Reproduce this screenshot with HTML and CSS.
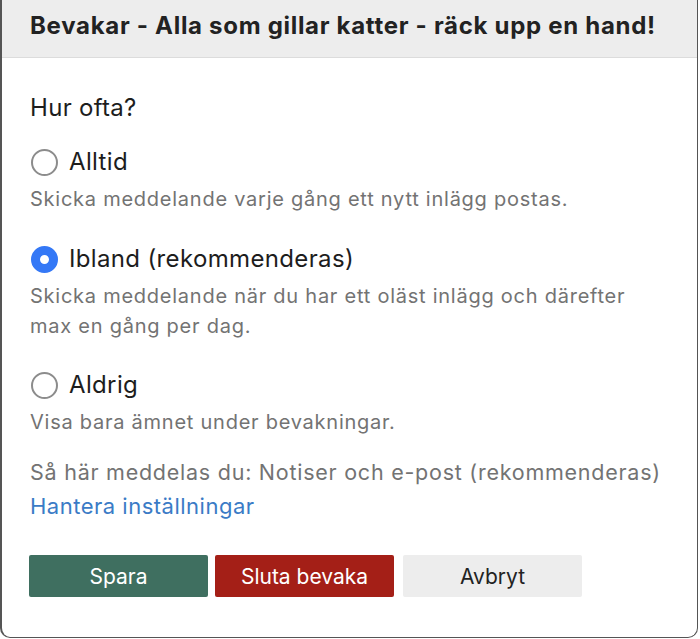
FILE: index.html
```
<!DOCTYPE html>
<html lang="sv">
<head>
<meta charset="utf-8">
<link rel="stylesheet" href="styles.css">
</head>
<body>
<div class="dialog">
  <div class="header"><h1 class="title">Bevakar - Alla som gillar katter - räck upp en hand!</h1></div>
  <div class="body">
    <p class="question">Hur ofta?</p>
    <div class="option option-first">
      <label class="opt-label"><span class="radio"></span>Alltid</label>
      <p class="desc">Skicka meddelande varje gång ett nytt inlägg postas.</p>
    </div>
    <div class="option">
      <label class="opt-label"><span class="radio checked"></span>Ibland (rekommenderas)</label>
      <p class="desc">Skicka meddelande när du har ett oläst inlägg och därefter max en gång per dag.</p>
    </div>
    <div class="option option-last">
      <label class="opt-label"><span class="radio"></span>Aldrig</label>
      <p class="desc">Visa bara ämnet under bevakningar.</p>
    </div>
    <p class="info">Så här meddelas du: Notiser och e-post (rekommenderas)<br><a class="link" href="#">Hantera inställningar</a></p>
    <div class="buttons">
      <button class="btn btn-save">Spara</button>
      <button class="btn btn-stop">Sluta bevaka</button>
      <button class="btn btn-cancel">Avbryt</button>
    </div>
  </div>
</div>
</body>
</html>
```
FILE: styles.css
```
html, body { margin: 0; padding: 0; background: #fff; }
body { font-family: Inter, "Noto Sans", sans-serif; color: #1d1d1d; }
.dialog {
  width: 698px;
  height: 638px;
  box-sizing: border-box;
  border: 1px solid #555;
  border-left-width: 2px;
  border-top: none;
  border-radius: 0 0 10px 10px;
  overflow: hidden;
}
.header {
  background: #ededed;
  height: 58px;
  border-bottom: 1px solid #dcdcdc;
  box-sizing: border-box;
  padding: 11px 28px 0;
}
.title { margin: 0; font-size: 24px; line-height: 30px; font-weight: 700; color: #222; letter-spacing: 0.7px; }
.body { padding: 35px 35px 0 28px; }
.question { margin: 0 0 24px; font-size: 24px; line-height: 30px; color: #1d1d1d; letter-spacing: 0.3px; }
.option { margin-bottom: 29px; }
.option-first { margin-bottom: 30px; }
.option-last { margin-bottom: 18px; }
.opt-label { display: flex; align-items: center; gap: 11px; font-size: 24px; line-height: 30px; color: #1d1d1d; letter-spacing: 0.35px; }
.radio { width: 27px; height: 27px; border: 2.5px solid #8c8c8c; border-radius: 50%; box-sizing: border-box; margin-left: 1px; flex: none; }
.radio.checked { border: 9px solid #3478f6; }
.desc { margin: 7px 0 0; font-size: 20px; line-height: 30px; color: #737373; letter-spacing: 0.75px; }
.info { margin: 0; font-size: 21.5px; line-height: 34px; color: #737373; letter-spacing: 0.75px; }
.link { color: #3a7bc6; text-decoration: none; font-size: 22px; letter-spacing: 0.5px; }
.buttons { display: flex; gap: 7px; margin: 32px 0 0 -1px; }
.btn { width: 179px; height: 42px; border: none; border-radius: 2px; font-family: inherit; font-size: 21px; padding: 0; }
.btn-cancel { margin-left: 2px; }
.btn-save { background: #3f6f60; color: #fff; }
.btn-stop { background: #a41f17; color: #fff; }
.btn-cancel { background: #ededed; color: #222; }
```
